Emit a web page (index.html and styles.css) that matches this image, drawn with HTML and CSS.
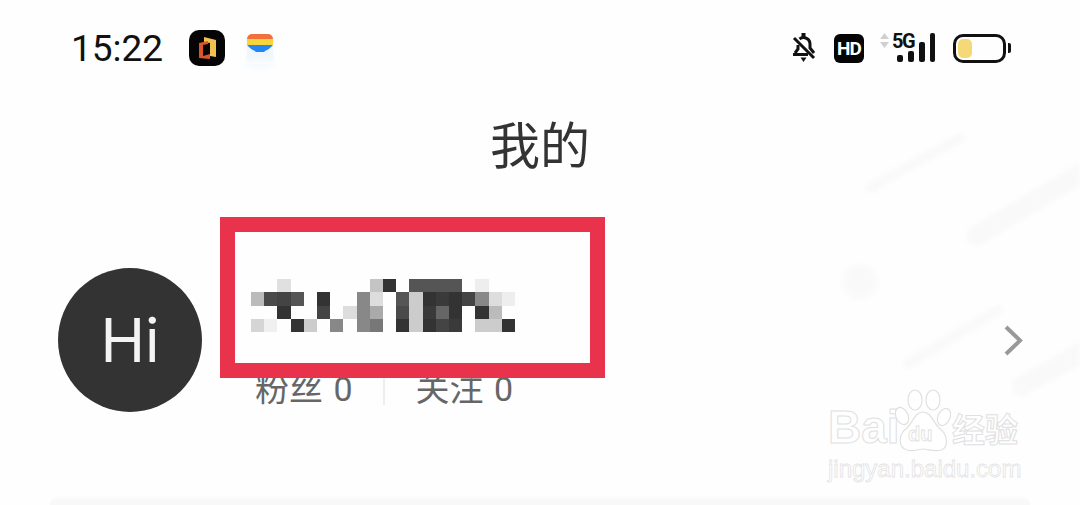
FILE: index.html
```html
<!DOCTYPE html>
<html lang="zh">
<head>
  <meta charset="utf-8">
  <meta name="viewport" content="width=device-width, initial-scale=1.0">
  <title>我的</title>
  <link rel="stylesheet" href="styles.css">
</head>
<body>
  <!-- 背景斜線裝飾 -->
  <svg class="streaks" width="300" height="290" viewBox="780 110 300 290">
    <g stroke="#f8f8f8" stroke-linecap="round" fill="none">
      <line x1="870" y1="188" x2="960" y2="138" stroke-width="10"/>
      <line x1="976" y1="236" x2="1095" y2="165" stroke-width="20"/>
      <line x1="908" y1="364" x2="998" y2="310" stroke-width="10"/>
      <line x1="1022" y1="386" x2="1095" y2="345" stroke-width="20"/>
    </g>
    <circle cx="860" cy="282" r="18" fill="#f9f9f9"/>
  </svg>

  <header class="status-bar">
    <div class="status-left">
      <span class="time">15:22</span>
      <svg class="app-icon" width="36" height="36" viewBox="0 0 36 36">
        <rect width="36" height="36" rx="10" fill="#050505"/>
        <path d="M15 7l12 3v17l-6-1V13l-6-1z" fill="#f2c14e"/>
        <path d="M10 13l9-2v3l-5 1v11l7-2v5l-11-1z" fill="#d9552b"/>
      </svg>
      <div class="wallet-wrap">
        <svg width="26" height="20" viewBox="0 0 26 20">
          <path d="M0 5a5 5 0 0 1 5-5h16a5 5 0 0 1 5 5v1H0z" fill="#f2703a"/>
          <rect y="5" width="26" height="6" fill="#f6d43c"/>
          <path d="M0 11h26l-3 3c-2 2-4 2-6 4H9c-2-2-4-2-6-4z" fill="#2585f2"/>
        </svg>
      </div>
    </div>
    <div class="status-right">
      <svg class="bell" width="26" height="31" viewBox="0 0 26 31" fill="none" stroke="#111" stroke-width="3">
        <path d="M2 21.500h15"/>
        <path d="M4 20l3-4v-4"/>
        <path d="M8.500 6A6.500 6.500 0 0 1 19 11.500v3.500l4 5"/>
        <path d="M3 5l20 20"/>
        <rect x="10.500" y="0" width="4" height="4" fill="#111" stroke="none"/>
        <path d="M9.500 24.500h6l-3 4.500z" fill="#111" stroke="none"/>
      </svg>
      <span class="hd">HD</span>
      <div class="signal">
        <svg width="56" height="32" viewBox="0 0 56 32">
          <path d="M0 7l4.500-6 4.500 6zM0 10l4.500 6 4.500-6z" fill="#d0d0d0"/>
          <rect x="17" y="23" width="6" height="7" rx="2" fill="#111"/>
          <rect x="28" y="19" width="6" height="11" rx="2" fill="#111"/>
          <rect x="39" y="10" width="6" height="20" rx="2" fill="#111"/>
          <rect x="50" y="1" width="5" height="29" rx="2" fill="#111"/>
        </svg>
        <span class="five-g">5G</span>
      </div>
      <div class="battery">
        <div class="battery-body"><div class="battery-level"></div></div>
        <div class="battery-tip"></div>
      </div>
    </div>
  </header>

  <h1 class="page-title">我的</h1>

  <section class="profile">
    <div class="avatar">Hi</div>
    <div class="profile-info">
      <!-- 紅框與馬賽克蓋在暱稱上 -->
      <div class="name-mask">
        <svg class="mosaic" width="264" height="53" viewBox="0 0 20 4" shape-rendering="crispEdges">
          <rect x="2" y="0" width="1" height="1" fill="#e0e0e0"/>
          <rect x="9" y="0" width="1" height="1" fill="#c4c4c4"/>
          <rect x="10" y="0" width="1" height="1" fill="#333"/>
          <rect x="12" y="0" width="4" height="1" fill="#555"/>
          <rect x="17" y="0" width="1" height="1" fill="#eee"/>

          <rect x="0" y="1" width="1" height="1" fill="#bbb"/>
          <rect x="1" y="1" width="1" height="1" fill="#4a4a4a"/>
          <rect x="2" y="1" width="1" height="1" fill="#444"/>
          <rect x="3" y="1" width="1" height="1" fill="#555"/>
          <rect x="5" y="1" width="1" height="1" fill="#333"/>
          <rect x="8" y="1" width="1" height="1" fill="#888"/>
          <rect x="9" y="1" width="1" height="1" fill="#ddd"/>
          <rect x="11" y="1" width="1" height="1" fill="#555"/>
          <rect x="12" y="1" width="1" height="1" fill="#ccc"/>
          <rect x="13" y="1" width="1" height="1" fill="#333"/>
          <rect x="14" y="1" width="1" height="1" fill="#3a3a3a"/>
          <rect x="15" y="1" width="1" height="1" fill="#333"/>
          <rect x="16" y="1" width="1" height="1" fill="#444"/>
          <rect x="17" y="1" width="1" height="1" fill="#888"/>
          <rect x="18" y="1" width="1" height="1" fill="#ddd"/>
          <rect x="19" y="1" width="1" height="1" fill="#eee"/>

          <rect x="2" y="2" width="1" height="1" fill="#333"/>
          <rect x="5" y="2" width="1" height="1" fill="#444"/>
          <rect x="7" y="2" width="1" height="1" fill="#ddd"/>
          <rect x="8" y="2" width="1" height="1" fill="#888"/>
          <rect x="9" y="2" width="1" height="1" fill="#aaa"/>
          <rect x="11" y="2" width="1" height="1" fill="#4a4a4a"/>
          <rect x="12" y="2" width="1" height="1" fill="#ccc"/>
          <rect x="13" y="2" width="1" height="1" fill="#3a3a3a"/>
          <rect x="14" y="2" width="1" height="1" fill="#666"/>
          <rect x="15" y="2" width="1" height="1" fill="#333"/>
          <rect x="17" y="2" width="1" height="1" fill="#333"/>
          <rect x="18" y="2" width="1" height="1" fill="#bbb"/>

          <rect x="0" y="3" width="1" height="1" fill="#d5d5d5"/>
          <rect x="1" y="3" width="1" height="1" fill="#f0f0f0"/>
          <rect x="3" y="3" width="1" height="1" fill="#333"/>
          <rect x="4" y="3" width="1" height="1" fill="#ccc"/>
          <rect x="6" y="3" width="1" height="1" fill="#888"/>
          <rect x="8" y="3" width="1" height="1" fill="#888"/>
          <rect x="9" y="3" width="1" height="1" fill="#777"/>
          <rect x="11" y="3" width="1" height="1" fill="#333"/>
          <rect x="12" y="3" width="1" height="1" fill="#ccc"/>
          <rect x="13" y="3" width="1" height="1" fill="#333"/>
          <rect x="14" y="3" width="1" height="1" fill="#444"/>
          <rect x="15" y="3" width="1" height="1" fill="#3a3a3a"/>
          <rect x="17" y="3" width="2" height="1" fill="#ccc"/>
          <rect x="19" y="3" width="1" height="1" fill="#333"/>
        </svg>
      </div>
      <div class="stats">
        <span class="stat">粉丝 0</span>
        <span class="stat-divider"></span>
        <span class="stat">关注 0</span>
      </div>
    </div>
    <svg class="chevron" width="19" height="31" viewBox="0 0 19 31" fill="none">
      <path d="M2 2l14 13.500L2 29" stroke="#999" stroke-width="4"/>
    </svg>
  </section>

  <div class="next-card"></div>

  <!-- 百度經驗浮水印 -->
  <div class="watermark">
    <div class="wm-top">
      <span class="wm-bai">Bai</span>
      <svg class="wm-paw" width="56" height="64" viewBox="0 0 56 64" fill="#fff" stroke="#e0e0e0" stroke-width="1.200">
        <ellipse cx="7" cy="28" rx="6" ry="9" transform="rotate(-25 7 28)"/>
        <ellipse cx="20" cy="12" rx="7" ry="10"/>
        <ellipse cx="38" cy="12" rx="7" ry="10"/>
        <ellipse cx="49" cy="29" rx="6" ry="9" transform="rotate(25 49 29)"/>
        <path d="M28 24C20 24 18 34 12 40C3 46 3 60 12 62C18 64 24 61 28 61C32 61 40 64 46 62C54 60 53 46 44 40C38 34 36 24 28 24z"/>
        <text x="13" y="53" class="wm-du">du</text>
      </svg>
      <span class="wm-cn">经验</span>
    </div>
    <div class="wm-url">jingyan.baidu.com</div>
  </div>
</body>
</html>
```

FILE: styles.css
```css
html, body {
  height: 505px;
}
body {
  margin: 0;
  background-color: #fefefe;
  color: #333;
  font-family: "Roboto", "Noto Sans CJK SC", sans-serif;
  overflow: hidden;
  position: relative;
}
.streaks {
  position: absolute;
  left: 780px;
  top: 110px;
  filter: blur(2px);
  opacity: 0.8;
}
/* 狀態列 */
.status-bar {
  height: 96px;
  padding: 0 69px 0 71px;
  display: flex;
  align-items: center;
  justify-content: space-between;
  position: relative;
}
.status-left, .status-right {
  display: flex;
  align-items: center;
}
.time {
  font-size: 37px;
  color: #111;
  width: 118px;
}
.wallet-wrap {
  margin-left: 22px;
  width: 26px;
  height: 32px;
  display: flex;
  align-items: flex-start;
  padding-top: 2px;
  box-sizing: border-box;
  background: linear-gradient(#ffffff, #eef5fc 70%, #fafcff);
  box-shadow: 0 4px 6px #f5f9fd;
}
.bell {
  margin-right: 17px;
}
.hd {
  width: 30px;
  height: 29px;
  line-height: 29px;
  background-color: #050505;
  color: #fff;
  border-radius: 6px;
  font-size: 19px;
  font-weight: 700;
  letter-spacing: -1px;
  text-align: center;
}
.signal {
  margin-left: 16px;
  height: 32px;
  position: relative;
}
.signal svg {
  display: block;
}
.five-g {
  position: absolute;
  left: 12px;
  top: 0;
  font-size: 20px;
  line-height: 18px;
  font-weight: 700;
  letter-spacing: -1.500px;
  color: #111;
}
.battery {
  margin-left: 17px;
  display: flex;
  align-items: center;
}
.battery-body {
  width: 53px;
  height: 29px;
  box-sizing: border-box;
  border: 3px solid #111;
  border-radius: 10px;
  padding: 2px;
}
.battery-level {
  width: 14px;
  height: 100%;
  background-color: #f6d977;
  border-radius: 5px;
}
.battery-tip {
  width: 3px;
  height: 10px;
  margin-left: 2px;
  background-color: #111;
  border-radius: 0 2px 2px 0;
}
.page-title {
  margin: 0;
  height: 102px;
  line-height: 102px;
  text-align: center;
  font-size: 50px;
  font-weight: 400;
  color: #333;
  position: relative;
}
/* 個人資料 */
.profile {
  margin-top: 70px;
  padding: 0 57px 0 58px;
  display: flex;
  align-items: center;
  position: relative;
}
.avatar {
  width: 144px;
  height: 144px;
  flex-shrink: 0;
  border-radius: 50%;
  background-color: #333;
  color: #f4f4f4;
  font-family: "Inter", sans-serif;
  font-size: 60px;
  line-height: 144px;
  text-align: center;
}
.profile-info {
  flex: 1;
  align-self: stretch;
  padding: 0 0 6px 53px;
  display: flex;
  flex-direction: column;
  justify-content: flex-end;
  position: relative;
}
.name-mask {
  position: absolute;
  left: 18px;
  top: -51px;
  width: 385px;
  height: 161px;
  box-sizing: border-box;
  border: 15px solid #e9334c;
  background-color: #fefefe;
  padding: 47px 0 0 16px;
  z-index: 1;
}
.mosaic {
  display: block;
}
.stats {
  display: flex;
  align-items: center;
  height: 40px;
  color: #666;
  font-size: 34px;
  word-spacing: 2px;
}
.stat {
  white-space: nowrap;
}
.stat-divider {
  width: 2px;
  height: 38px;
  margin: 0 31px 0 30px;
  background-color: #eee;
}
.next-card {
  margin: 83px 50px 0;
  height: 10px;
  background: linear-gradient(#fefefe, #f8f8f8 60%);
  border-radius: 12px 12px 0 0;
}
/* 浮水印 */
.watermark {
  position: absolute;
  left: 828px;
  top: 388px;
  color: #fff;
  -webkit-text-stroke: 1px #e0e0e0;
}
.wm-top {
  display: flex;
  align-items: flex-end;
  height: 64px;
}
.wm-bai {
  width: 67px;
  font-family: "Liberation Sans", sans-serif;
  font-size: 46px;
  font-weight: 700;
  line-height: 50px;
}
.wm-paw {
  flex-shrink: 0;
}
.wm-du {
  font-family: "Liberation Sans", sans-serif;
  font-size: 20px;
  font-weight: 700;
  stroke-width: 0.800;
}
.wm-cn {
  margin-left: 1px;
  font-family: "Noto Sans CJK SC", sans-serif;
  font-size: 33px;
  font-weight: 700;
  line-height: 48px;
  white-space: nowrap;
}
.wm-url {
  margin-top: 4px;
  font-family: "Liberation Sans", sans-serif;
  font-size: 24px;
  line-height: 26px;
  white-space: nowrap;
  -webkit-text-stroke: 0.8px #e4e4e4;
}
```
